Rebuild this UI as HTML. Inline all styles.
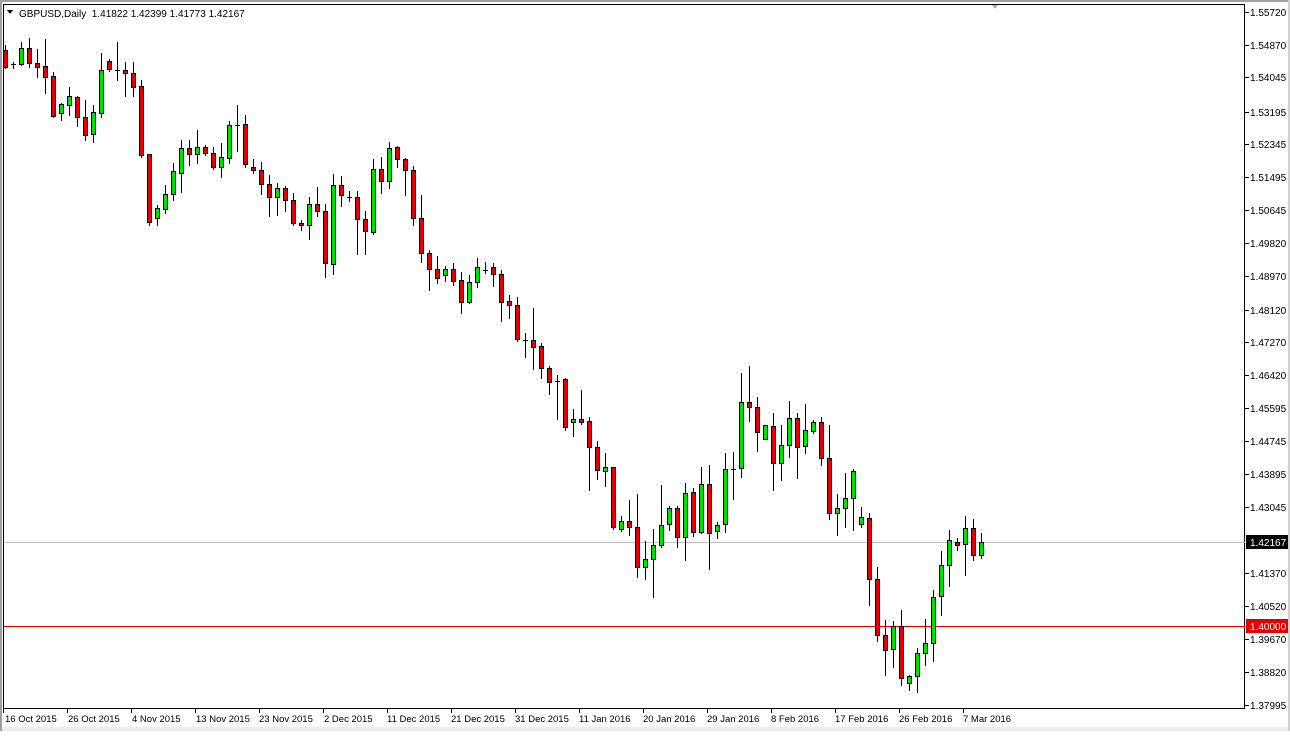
<!DOCTYPE html>
<html><head><meta charset="utf-8"><style>
html,body{margin:0;padding:0;background:#fff;}
body{width:1290px;height:731px;overflow:hidden;position:relative;}
svg text{font-family:"Liberation Sans",Arial,sans-serif;font-size:10px;fill:#000;}
svg text.d{font-size:9.5px;}
</style></head><body>
<svg id="s" width="1290" height="731" xmlns="http://www.w3.org/2000/svg" shape-rendering="crispEdges">
<rect x="0" y="0" width="1290" height="731" fill="#fff"/>
<rect x="0" y="0" width="1290" height="2" fill="#a0a0a0"/>
<rect x="0" y="727" width="1290" height="4" fill="#ececec"/>
<rect x="0" y="0" width="2" height="731" fill="#a0a0a0"/>
<rect x="1288" y="0" width="2" height="731" fill="#d0d0d0"/>
<rect x="3.5" y="4.5" width="1241" height="704" fill="none" stroke="#000" stroke-width="1"/>
<path d="M992 5 L998 5 L995 9 Z" fill="#b0b0b0"/>
<line x1="4" y1="542.5" x2="1245" y2="542.5" stroke="#c0c0c0"/>
<line x1="4" y1="626.5" x2="1245" y2="626.5" stroke="#e00000"/>
<path d="M7 10 L13 10 L10 14 Z" fill="#000"/>
<text x="19" y="17">GBPUSD,Daily&#160; 1.41822 1.42399 1.41773 1.42167</text>
<g id="c"></g>
<g id="ax"></g>
<rect x="1246" y="535" width="42" height="14" fill="#000"/>
<text x="1250" y="546" style="fill:#fff">1.42167</text>
<rect x="1246" y="619" width="42" height="14" fill="#e00000"/>
<text x="1250" y="630" style="fill:#fff">1.40000</text>
<text x="1250" y="16">1.55720</text>
<text x="1250" y="49">1.54870</text>
<text x="1250" y="81">1.54045</text>
<text x="1250" y="116">1.53195</text>
<text x="1250" y="148">1.52345</text>
<text x="1250" y="181">1.51495</text>
<text x="1250" y="214">1.50645</text>
<text x="1250" y="247">1.49820</text>
<text x="1250" y="280">1.48970</text>
<text x="1250" y="314">1.48120</text>
<text x="1250" y="346">1.47270</text>
<text x="1250" y="379">1.46420</text>
<text x="1250" y="412">1.45595</text>
<text x="1250" y="445">1.44745</text>
<text x="1250" y="478">1.43895</text>
<text x="1250" y="511">1.43045</text>
<text x="1250" y="577">1.41370</text>
<text x="1250" y="610">1.40520</text>
<text x="1250" y="643">1.39670</text>
<text x="1250" y="676">1.38820</text>
<text x="1250" y="709">1.37995</text>
<text class="d" x="5" y="722">16 Oct 2015</text>
<text class="d" x="68" y="722">26 Oct 2015</text>
<text class="d" x="132" y="722">4 Nov 2015</text>
<text class="d" x="196" y="722">13 Nov 2015</text>
<text class="d" x="259" y="722">23 Nov 2015</text>
<text class="d" x="324" y="722">2 Dec 2015</text>
<text class="d" x="387" y="722">11 Dec 2015</text>
<text class="d" x="451" y="722">21 Dec 2015</text>
<text class="d" x="515" y="722">31 Dec 2015</text>
<text class="d" x="579" y="722">11 Jan 2016</text>
<text class="d" x="643" y="722">20 Jan 2016</text>
<text class="d" x="707" y="722">29 Jan 2016</text>
<text class="d" x="771" y="722">8 Feb 2016</text>
<text class="d" x="835" y="722">17 Feb 2016</text>
<text class="d" x="899" y="722">26 Feb 2016</text>
<text class="d" x="963" y="722">7 Mar 2016</text>
</svg>
<script>
var d=[
[50,67,45,68,'r'],[64,64,62,68,'d'],[48,64,42,65,'g'],[48,63,38,67,'r'],[63,67,49,77,'r'],[66,77,39,93,'r'],[76,116,72,117,'r'],[104,113,103,120,'g'],[96,105,87,115,'g'],[97,117,96,126,'r'],
[117,135,100,140,'r'],[112,134,105,142,'g'],[70,113,53,117,'g'],[61,69,59,71,'r'],[70,70,42,80,'d'],[70,73,62,96,'r'],[73,87,62,96,'r'],[86,155,80,157,'r'],[154,222,154,225,'r'],[208,218,205,225,'g'],
[194,209,185,213,'g'],[171,194,163,200,'g'],[148,173,140,192,'g'],[148,154,140,165,'r'],[147,154,130,163,'g'],[147,153,145,155,'r'],[153,167,147,169,'r'],[157,167,143,177,'g'],[125,158,121,163,'g'],[125,125,105,151,'d'],
[124,164,115,167,'r'],[167,170,159,173,'r'],[170,184,162,194,'r'],[184,197,175,216,'r'],[188,197,183,215,'g'],[188,200,186,211,'r'],[200,223,193,225,'r'],[223,225,220,230,'r'],[204,225,197,239,'g'],[204,211,187,216,'r'],
[211,263,204,277,'r'],[185,264,174,274,'g'],[185,195,176,206,'r'],[197,197,191,201,'d'],[197,219,191,254,'r'],[219,231,211,254,'r'],[169,232,159,234,'g'],[169,181,157,193,'r'],[148,181,142,188,'g'],[147,159,146,167,'r'],
[159,170,158,195,'r'],[170,218,166,225,'r'],[218,253,195,262,'r'],[253,269,250,290,'r'],[269,278,256,283,'r'],[269,275,266,281,'g'],[269,281,263,285,'r'],[280,302,272,313,'r'],[282,302,275,303,'g'],[267,282,258,287,'g'],
[270,270,262,273,'d'],[267,274,263,286,'r'],[274,302,270,321,'r'],[301,305,295,318,'r'],[305,339,297,341,'r'],[340,340,333,357,'d'],[340,347,308,369,'r'],[346,368,343,378,'r'],[368,382,366,394,'r'],[381,381,375,419,'d'],
[379,427,378,430,'r'],[419,422,409,436,'g'],[419,422,390,424,'r'],[421,447,417,490,'r'],[447,470,441,479,'r'],[467,471,453,486,'g'],[467,527,467,529,'r'],[521,529,516,531,'g'],[521,527,500,535,'r'],[527,567,494,577,'r'],
[559,567,541,579,'g'],[545,559,529,597,'g'],[525,545,485,547,'g'],[508,524,506,530,'g'],[508,537,506,547,'r'],[493,537,483,560,'g'],[492,532,488,536,'r'],[484,532,467,533,'g'],[484,533,465,569,'r'],[525,531,522,538,'g'],
[469,524,453,532,'g'],[469,469,452,499,'d'],[402,468,373,477,'g'],[402,407,366,421,'r'],[407,432,397,451,'r'],[425,439,425,439,'g'],[426,463,413,490,'r'],[445,463,425,480,'g'],[418,445,401,457,'g'],[418,447,413,478,'r'],
[430,446,404,453,'g'],[422,431,420,433,'g'],[422,458,417,465,'r'],[458,513,425,519,'r'],[508,513,494,535,'g'],[498,508,473,527,'g'],[471,498,469,530,'g'],[517,524,507,527,'g'],[518,579,513,605,'r'],[579,635,567,641,'r'],
[635,650,620,675,'r'],[626,649,621,667,'g'],[626,678,610,685,'r'],[676,683,675,690,'g'],[653,676,648,692,'g'],[643,653,619,665,'g'],[597,643,590,661,'g'],[565,596,551,615,'g'],[540,565,530,586,'g'],[542,545,538,550,'r'],
[528,544,516,575,'g'],[528,555,519,560,'r'],[542,555,533,558,'g']];
var h='';
for(var i=0;i<d.length;i++){var c=d[i],x=5+8*i;
h+='<line x1="'+(x+0.5)+'" y1="'+c[2]+'" x2="'+(x+0.5)+'" y2="'+(c[3]+1)+'" stroke="#000"/>';
if(c[4]=='d'){h+='<line x1="'+(x-2)+'" y1="'+(c[0]+0.5)+'" x2="'+(x+3)+'" y2="'+(c[0]+0.5)+'" stroke="#000"/>';}
else{var t=c[0],b=c[1];if(b-t<2)b=t+2;
h+='<rect x="'+(x-1.5)+'" y="'+(t+0.5)+'" width="4" height="'+(b-t)+'" fill="'+(c[4]=='r'?'#e00000':'#00e000')+'" stroke="#000"/>';}}
document.getElementById('c').innerHTML=h;
var a='';
var ys=[12,45,77,112,144,177,210,243,276,310,342,375,408,441,474,507,573,606,639,672,705];
for(var j=0;j<ys.length;j++)a+='<line x1="1245" y1="'+(ys[j]+0.5)+'" x2="1249" y2="'+(ys[j]+0.5)+'" stroke="#000"/>';
for(var k=0;k<16;k++){var xx=3+64*k;a+='<line x1="'+(xx+0.5)+'" y1="709" x2="'+(xx+0.5)+'" y2="713" stroke="#000"/>';}
document.getElementById('ax').innerHTML=a;
</script>
</body></html>
